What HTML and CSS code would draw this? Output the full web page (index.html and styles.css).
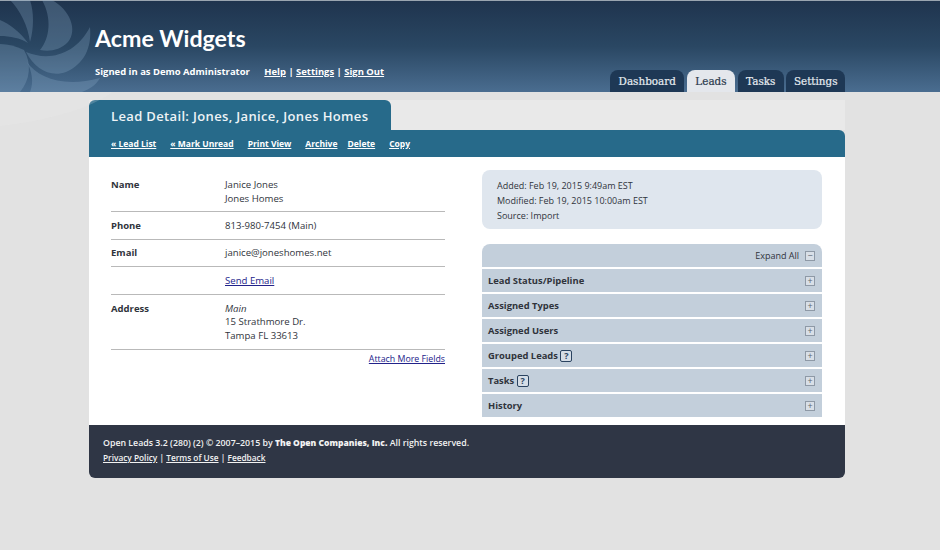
FILE: index.html
```html
<!DOCTYPE html>
<html lang="en">
<head>
    <meta charset="UTF-8">
    <meta name="viewport" content="width=device-width, initial-scale=1.0">
    <title>Lead Detail</title>
    <link rel="stylesheet" href="styles.css">
</head>
<body>
    <svg class="swirl" width="120" height="130" viewBox="0 0 120 130">
        <path d="M0 92 L112 92 C92 108 50 120 0 126 Z" fill="#f0f0f0" fill-opacity="0.2"/>
        <g fill="#8fb0cc" fill-opacity="0.28">
            <path d="M40 50 C50 38 52 18 42 0 L52 0 C70 10 78 30 68 42 C60 50 50 52 40 50 Z"/>
            <path d="M30 42 C34 28 34 12 30 0 L10 0 C20 10 28 26 30 42 Z"/>
            <path d="M28 43 C20 32 10 24 0 20 L0 36 C10 36 20 38 28 43 Z"/>
            <path d="M24 50 C16 46 8 44 0 44 L0 92 L20 92 C30 80 32 64 24 50 Z"/>
            <path d="M26 52 C50 62 76 54 90 27 C92 48 84 64 66 72 C50 78 34 68 26 52 Z"/>
            <path d="M27 62 C38 78 64 88 100 78 C96 85 90 89 82 92 L30 92 C34 82 32 72 27 62 Z"/>
        </g>
    </svg>

    <header class="top">
        <div class="brand">
            <h1>Acme Widgets</h1>
            <p class="signed">
                <span class="who">Signed in as Demo Administrator</span>
                <a href="#">Help</a> | <a href="#">Settings</a> | <a href="#">Sign Out</a>
            </p>
        </div>
        <nav class="tabs">
            <a href="#" class="tab">Dashboard</a>
            <a href="#" class="tab active">Leads</a>
            <a href="#" class="tab">Tasks</a>
            <a href="#" class="tab">Settings</a>
        </nav>
    </header>

    <div class="page">
        <div class="title-band">
            <h2 class="title-tab">Lead Detail: Jones, Janice, Jones Homes</h2>
        </div>
        <div class="actions">
            <a href="#">« Lead List</a>
            <a href="#">« Mark Unread</a>
            <a href="#">Print View</a>
            <a href="#">Archive</a>
            <a href="#" class="tight">Delete</a>
            <a href="#">Copy</a>
        </div>

        <main class="content">
            <section class="fields">
                <div class="row">
                    <div class="label">Name</div>
                    <div>Janice Jones<br>Jones Homes</div>
                </div>
                <div class="row">
                    <div class="label">Phone</div>
                    <div>813-980-7454 (Main)</div>
                </div>
                <div class="row">
                    <div class="label">Email</div>
                    <div>janice@joneshomes.net</div>
                </div>
                <div class="row">
                    <div class="label"></div>
                    <div><a href="#">Send Email</a></div>
                </div>
                <div class="row">
                    <div class="label">Address</div>
                    <div><em>Main</em><br>15 Strathmore Dr.<br>Tampa FL 33613</div>
                </div>
                <div class="attach"><a href="#">Attach More Fields</a></div>
            </section>

            <section class="side">
                <div class="info">
                    <p>Added: Feb 19, 2015 9:49am EST</p>
                    <p>Modified: Feb 19, 2015 10:00am EST</p>
                    <p>Source: Import</p>
                </div>
                <div class="accordion">
                    <div class="acc-head">Expand All <span class="box">&minus;</span></div>
                    <div class="acc-row"><span>Lead Status/Pipeline</span><span class="box">+</span></div>
                    <div class="acc-row"><span>Assigned Types</span><span class="box">+</span></div>
                    <div class="acc-row"><span>Assigned Users</span><span class="box">+</span></div>
                    <div class="acc-row"><span>Grouped Leads <span class="help">?</span></span><span class="box">+</span></div>
                    <div class="acc-row"><span>Tasks <span class="help">?</span></span><span class="box">+</span></div>
                    <div class="acc-row"><span>History</span><span class="box">+</span></div>
                </div>
            </section>
        </main>

        <footer class="foot">
            <p>Open Leads 3.2 (280) (2) © 2007–2015 by <strong>The Open Companies, Inc.</strong> All rights reserved.</p>
            <p class="foot-links"><a href="#">Privacy Policy</a> | <a href="#">Terms of Use</a> | <a href="#">Feedback</a></p>
        </footer>
    </div>
</body>
</html>
```

FILE: styles.css
```css
* { box-sizing: border-box; }
body { margin: 0; height: 550px; overflow: hidden; background: #e2e2e2; color: #30343c; font-family: "Open Sans", sans-serif; font-size: 9.6px; position: relative; }
p { margin: 0; }
a { color: inherit; }

.swirl { position: absolute; left: 0; top: 0; z-index: 1; }

.top { position: relative; height: 92px; padding: 1px 95px 0 95px; display: flex; justify-content: space-between; align-items: flex-end; background: linear-gradient(#1f344e, #2a4763 50%, #4a6d90); border-top: 1px solid #9aa5b0; color: #fff; }
.brand { position: relative; z-index: 2; align-self: flex-start; }
.brand h1 { margin: 21px 0 0; font-family: Lato, sans-serif; font-size: 23.2px; line-height: 30px; font-weight: 700; }
.signed { margin-top: 12px; font-size: 9.45px; font-weight: 700; line-height: 14px; }
.who { margin-right: 12px; }
.tabs { display: flex; gap: 2.5px; }
.tab { height: 22px; padding: 0 8.5px; line-height: 22px; background: #1e3855; color: #e6ebf0; border-radius: 8px 8px 0 0; font-family: "DejaVu Serif", serif; font-size: 10.4px; text-decoration: none; -webkit-text-stroke: 0.2px; }
.tab:last-child { padding: 0 7.5px; }
.tab.active { background: #e4e7ec; color: #2b3a4c; }

.page { margin: 8px 95px 0 89px; }
.title-band { height: 30px; background: #e9e9e9; }
.title-tab { display: inline-block; margin: 0; width: 302px; height: 30px; padding: 0 0 0 22px; line-height: 32px; background: #276a8a; color: #eef3f6; border-radius: 6px 6px 0 0; font-size: 13px; font-weight: 600; letter-spacing: 0.35px; }
.actions { display: flex; gap: 14px; height: 27px; padding-left: 22px; align-items: center; background: #276a8a; color: #fff; font-size: 8.5px; font-weight: 700; border-top-right-radius: 6px; }
.actions .tight { margin-left: -4px; }

.content { height: 268px; padding: 21px 23px 0 22px; display: flex; justify-content: space-between; background: #fff; }
.fields { width: 334px; line-height: 13.5px; }
.row { display: flex; padding: 6.7px 0 6.5px; border-bottom: 1px solid #b9b9b9; }
.row:first-child { padding: 0 0 6px; }
.label { width: 114px; font-size: 9.5px; font-weight: 700; }
.fields a { color: #22228a; }
.attach { margin-top: 3px; text-align: right; font-size: 8.8px; }

.side { width: 340px; margin-top: -8px; }
.info { height: 59px; padding: 8px 15px; background: #dfe6ee; border-radius: 8px; font-size: 9px; line-height: 15px; }
.accordion { margin-top: 15px; display: flex; flex-direction: column; gap: 2px; }
.acc-head, .acc-row { height: 23px; padding: 0 7px 1px 6px; display: flex; align-items: center; justify-content: space-between; background: #c3cfdb; font-size: 9.4px; font-weight: 700; }
.acc-head { justify-content: flex-end; gap: 6px; border-radius: 8px 8px 0 0; font-size: 9px; font-weight: 400; }
.box { width: 10px; height: 10px; margin-top: 2px; line-height: 8px; text-align: center; border: 1px solid #8e99a6; background: #d8dfe7; color: #5b6470; font-size: 9px; font-weight: 400; }
.help { display: inline-block; width: 12px; height: 12px; line-height: 10px; text-align: center; border: 1px solid #2a4360; border-radius: 2px; background: #d5dde6; color: #2a4360; font-size: 9px; }

.foot { height: 53px; padding: 10px 14px; background: #2f3645; color: #f2f2f2; border-radius: 0 0 6px 6px; line-height: 15px; font-weight: 600; font-size: 8.8px; }
.foot strong { font-size: 8.5px; }
.foot-links { margin-top: -1px; font-size: 8.3px; }
```
